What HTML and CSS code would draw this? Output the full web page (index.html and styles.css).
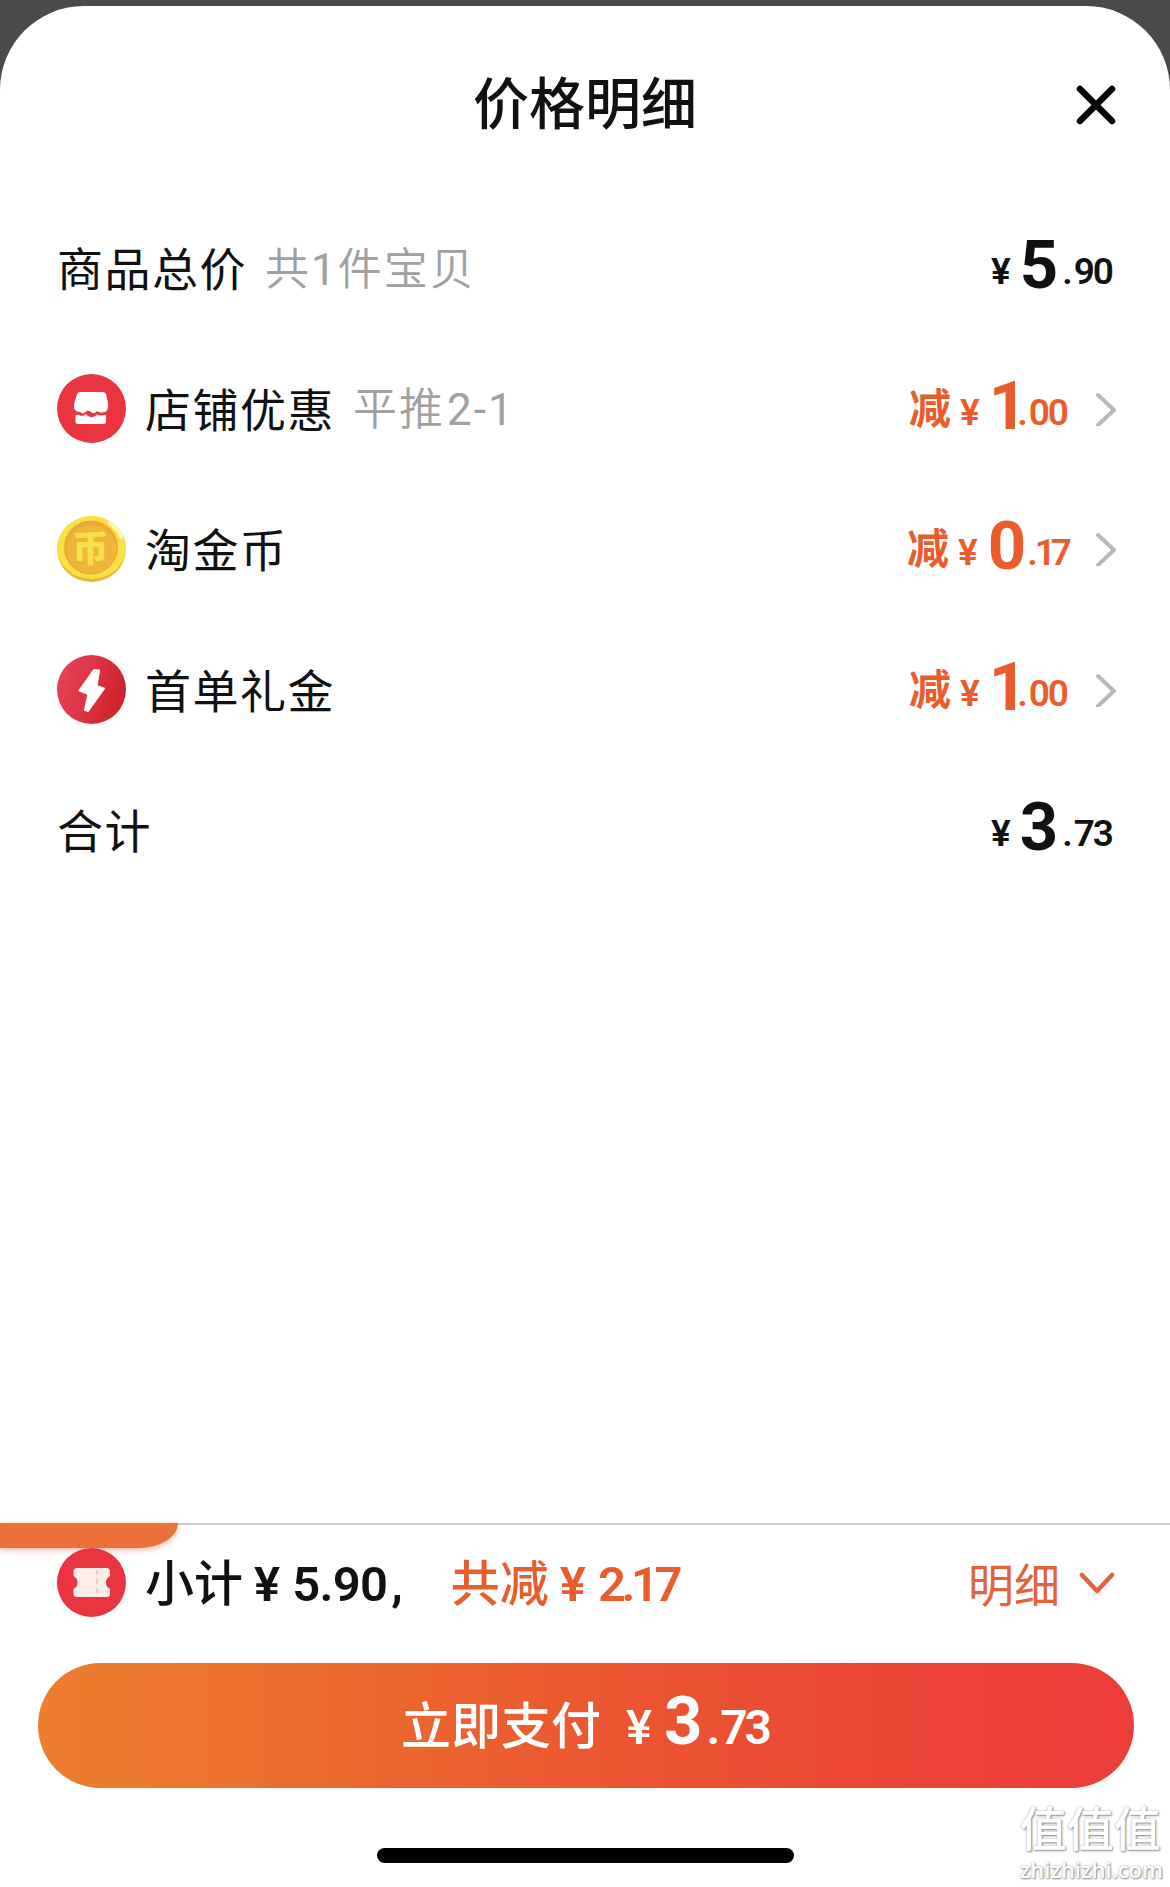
FILE: index.html
```
<!DOCTYPE html>
<html lang="zh-CN">
<head>
    <meta charset="UTF-8">
    <meta name="viewport" content="width=device-width, initial-scale=1.0">
    <title>价格明细</title>
    <link rel="stylesheet" href="styles.css">
</head>
<body>
    <div class="sheet">
        <header class="header">
            <h1>价格明细</h1>
            <svg class="close" viewBox="0 0 40 40">
                <path d="M4 4L36 36M36 4L4 36" />
            </svg>
        </header>

        <main class="list">
            <div class="row">
                <span class="label">商品总价</span>
                <span class="note">共<span class="num">1</span>件宝贝</span>
                <span class="price"><span class="yen">¥</span><span class="big">5</span><span class="small"><i>.</i>90</span></span>
            </div>
            <div class="row">
                <svg class="icon" viewBox="0 0 69 69">
                    <circle cx="34.5" cy="34.5" r="34.5" fill="#ea3440" />
                    <path fill="#fff" d="M23 18H46Q48 18 49 20L51 29Q52 38 46 38.500Q42 39 40 37Q37 41 34 38Q31 36 29 37.500Q26 41 23 38Q16 38 17 30L20 20Q21 18 23 18Z" />
                    <path fill="#fff" d="M18.500 41Q22 40 24 42Q27 42 29 40Q32 44 35 43Q38 43 40 40.500Q43 42 49 41V47.500Q49 50 46.500 50H21Q18.500 50 18.500 47.500Z" />
                </svg>
                <span class="label">店铺优惠</span>
                <span class="note">平推<span class="num range">2-1</span></span>
                <span class="price off one"><b>减</b><span class="yen">¥</span><span class="big">1</span><span class="small"><i>.</i>00</span></span>
                <svg class="arrow" viewBox="0 0 22 34"><path d="M3 3L19 18L3 33" /></svg>
            </div>
            <div class="row">
                <svg class="icon" viewBox="0 0 69 69">
                    <ellipse cx="34.500" cy="34.500" rx="34.300" ry="32.500" fill="#f0b638" />
                    <ellipse cx="34.500" cy="32.500" rx="34.300" ry="31.500" fill="#f9e143" />
                    <circle cx="34" cy="32.500" r="27" fill="#eda935" />
                    <ellipse cx="34.500" cy="34" rx="25" ry="24" fill="#f0b63b" />
                    <path d="M53 8Q62 15 64 22" fill="none" stroke="#fff5b5" stroke-width="4" stroke-linecap="round" />
                    <text class="coin-text" x="33.500" y="47">币</text>
                </svg>
                <span class="label">淘金币</span>
                <span class="price off zero"><b>减</b><span class="yen">¥</span><span class="big">0</span><span class="small"><i>.</i>17</span></span>
                <svg class="arrow" viewBox="0 0 22 34"><path d="M3 3L19 18L3 33" /></svg>
            </div>
            <div class="row">
                <svg class="icon" viewBox="0 0 69 69">
                    <defs>
                        <linearGradient id="gift" x1="0" y1="0" x2="1" y2="0.300">
                            <stop offset="0" stop-color="#e7445a" />
                            <stop offset="0.600" stop-color="#de3240" />
                            <stop offset="1" stop-color="#cd252b" />
                        </linearGradient>
                    </defs>
                    <circle cx="34.5" cy="34.5" r="34.5" fill="url(#gift)" />
                    <path fill="#fff" stroke="#fff" stroke-width="2" stroke-linejoin="round" d="M37 15L42 15.500L39.500 31L47 33.500L31 56L28 55L31.500 39L22.500 35.500Z" />
                </svg>
                <span class="label">首单礼金</span>
                <span class="price off one"><b>减</b><span class="yen">¥</span><span class="big">1</span><span class="small"><i>.</i>00</span></span>
                <svg class="arrow" viewBox="0 0 22 34"><path d="M3 3L19 18L3 33" /></svg>
            </div>
            <div class="row">
                <span class="label">合计</span>
                <span class="price"><span class="yen">¥</span><span class="big">3</span><span class="small"><i>.</i>73</span></span>
            </div>
        </main>

        <footer class="footer">
            <div class="tab"></div>
            <div class="subtotal">
                <svg class="icon" viewBox="0 0 69 69">
                    <circle cx="34.5" cy="34.5" r="34.5" fill="#ea3440" />
                    <path fill="#fbeee8" d="M20 20H49.500Q53 20 53 23.500V28Q49 30 49 34.500Q49 39 53 41V45.500Q53 49 49.500 49H20Q16.500 49 16.500 45.500V41Q20.500 39 20.500 34.500Q20.500 30 16.500 28V23.500Q16.500 20 20 20Z" />
                    <path d="M40 22V48" stroke="#f5cbc4" stroke-width="2" stroke-dasharray="5 4" />
                </svg>
                <span class="sum">小计<span class="amount">¥<em>5.90</em></span><span class="comma">,</span></span>
                <span class="sum saved">共减<span class="amount">¥<em>2.17</em></span></span>
                <span class="detail">明细</span>
                <svg class="down" viewBox="0 0 36 24"><path d="M3 4L18 20L33 4" /></svg>
            </div>
            <div class="pay">
                <span class="pay-text">立即支付</span>
                <span class="pay-price"><span class="yen">¥</span><span class="big">3</span><span class="small"><i>.</i>73</span></span>
            </div>
            <div class="home-bar"></div>
        </footer>
    </div>

    <div class="watermark">
        <div class="mark-name">值值值</div>
        <div class="mark-url">zhizhizhi.com</div>
    </div>
</body>
</html>
```

FILE: styles.css
```
* {
    box-sizing: border-box;
}

body {
    margin: 0;
    height: 1887px;
    padding-top: 6px;
    background: #4a4a4a;
    color: #111;
    font-family: "Noto Sans CJK SC", sans-serif;
    overflow: hidden;
}

.sheet {
    display: flex;
    flex-direction: column;
    height: 1881px;
    background: #fff;
    border-radius: 84px 84px 0 0;
    overflow: hidden;
}

.header {
    display: grid;
    grid-template-columns: 1fr auto 1fr;
    align-items: center;
    height: 192px;
    padding: 0 54px;
}

h1 {
    grid-column: 2;
    margin: 0 0 5px;
    font-size: 56px;
    font-weight: 500;
    line-height: 60px;
}

.close {
    justify-self: end;
    width: 40px;
    height: 40px;
    margin-top: 6px;
}

.close path {
    fill: none;
    stroke: #000;
    stroke-width: 6.5;
    stroke-linecap: round;
}

.list {
    flex: 1;
}

.row {
    display: flex;
    align-items: center;
    height: 140.5px;
    padding: 0 53px 0 57px;
}

.icon {
    flex: none;
    width: 69px;
    height: 69px;
    margin-right: 19px;
}

.coin-text {
    fill: #fae04a;
    font-size: 36px;
    font-weight: 900;
    text-anchor: middle;
}

.label {
    margin-bottom: 4px;
    font-size: 46px;
    line-height: 60px;
    letter-spacing: 1.5px;
}

.note {
    margin: 0 0 1px 18px;
    color: #a0a0a0;
    font-size: 44px;
    font-weight: 350;
    line-height: 60px;
    letter-spacing: 2px;
}

.num {
    font-family: Roboto, sans-serif;
    font-size: 44px;
    font-weight: 400;
}

.range {
    margin-left: 2px;
    letter-spacing: 2px;
}

.price {
    display: flex;
    align-items: baseline;
    margin: 0 0 3px auto;
    padding-right: 5px;
    font-family: Roboto, "Noto Sans CJK SC", sans-serif;
    font-weight: 700;
    line-height: 60px;
}

.price b {
    position: relative;
    top: -1px;
    margin-right: 9px;
    font-size: 42px;
    font-weight: 700;
}

.yen {
    font-size: 37px;
    font-weight: 600;
}

.big {
    position: relative;
    top: 4px;
    margin: 0 6px 0 9px;
    font-size: 67px;
    letter-spacing: -2px;
}

.small {
    font-size: 37px;
    font-weight: 600;
    letter-spacing: -2px;
}

.small i {
    margin-right: 3px;
    font-style: normal;
}

.off {
    padding-right: 0;
    color: #e95d2c;
}

.one .big {
    margin-right: 0;
    letter-spacing: -10px;
}

.zero .big {
    margin: 0 3px 0 10px;
}

.zero .small {
    letter-spacing: -5px;
}

.zero .small i {
    margin-right: 2px;
}

.arrow {
    flex: none;
    width: 22px;
    height: 34px;
    margin-left: 28px;
}

.arrow path,
.down path {
    fill: none;
    stroke: #b8b8b8;
    stroke-width: 4;
    stroke-linecap: round;
    stroke-linejoin: round;
}

.footer {
    position: relative;
    height: 364px;
    border-top: 2px solid #ccc;
}

.tab {
    position: absolute;
    top: -2px;
    left: 0;
    width: 178px;
    height: 25px;
    background: #eb7138;
    border-radius: 0 0 40px 0 / 0 0 25px 0;
    box-shadow: 0 2px 6px rgba(235, 113, 56, 0.5);
}

.subtotal {
    position: relative;
    display: flex;
    align-items: center;
    height: 115px;
    padding: 0 55px 0 57px;
}

.sum {
    font-size: 49px;
    font-weight: 500;
    line-height: 60px;
    white-space: nowrap;
}

.amount,
.comma {
    font-family: Roboto, sans-serif;
    font-size: 49px;
    font-weight: 600;
}

.amount {
    margin-left: 11px;
}

.amount em {
    margin-left: 12px;
    font-style: normal;
    letter-spacing: -0.7px;
}

.comma {
    margin-left: 4px;
}

.saved {
    margin-left: 48px;
    color: #e95d2c;
}

.saved em {
    letter-spacing: -4.5px;
}

.detail {
    margin: 0 0 1px auto;
    color: #e2623a;
    font-size: 46px;
    line-height: 60px;
}

.down {
    width: 36px;
    height: 24px;
    margin-left: 19px;
}

.down path {
    stroke: #e2623a;
    stroke-width: 4.5;
}

.pay {
    display: flex;
    align-items: baseline;
    justify-content: center;
    width: 1096px;
    height: 125px;
    margin: 23px 0 0 38px;
    padding-right: 2px;
    border-radius: 63px;
    background: linear-gradient(90deg, #ed7e2f, #ec682e 30%, #eb5431 55%, #eb4236 83%, #ed3d3a);
    color: #fff;
    line-height: 117px;
}

.pay-text {
    font-size: 50px;
    font-weight: 500;
}

.pay-price {
    display: flex;
    align-items: baseline;
    margin-left: 25px;
    font-family: Roboto, sans-serif;
    font-weight: 700;
}

.pay-price .yen {
    font-size: 49px;
    font-weight: 500;
}

.pay-price .big {
    top: 0;
    margin-left: 12px;
}

.pay-price .small {
    font-size: 48px;
    letter-spacing: -3px;
}

.home-bar {
    width: 417px;
    height: 15px;
    margin: 60px auto 0;
    border-radius: 8px;
    background: #000;
}

.watermark {
    position: absolute;
    right: 7px;
    bottom: 4px;
    color: #fff;
    text-shadow: 1px 1px 2px #888, 0 0 2px #aaa;
}

.mark-name {
    margin-bottom: 4px;
    font-size: 47px;
    font-weight: 500;
    line-height: 50px;
}

.mark-url {
    font-family: "Open Sans", sans-serif;
    font-size: 22px;
    font-weight: 600;
    line-height: 28px;
}
```
